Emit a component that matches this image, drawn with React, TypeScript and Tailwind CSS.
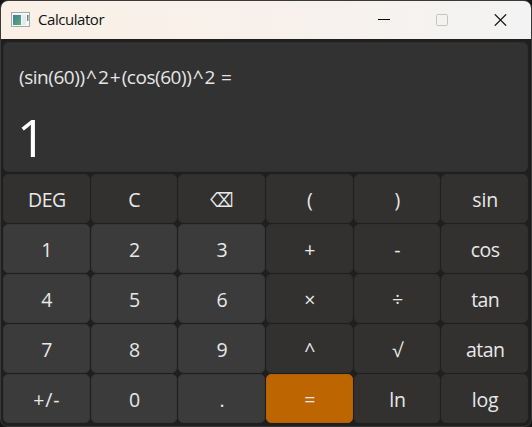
type Key = { label: string; kind: 'digit' | 'op' | 'equals'; style?: string };

const keys: Key[] = [
  { label: 'DEG', kind: 'op', style: 'tracking-[-0.5px]' },
  { label: 'C', kind: 'op' },
  { label: '⌫', kind: 'op', style: "inline-block font-['DejaVu_Sans'] origin-center translate-y-px scale-x-[0.84]" },
  { label: '(', kind: 'op' },
  { label: ')', kind: 'op' },
  { label: 'sin', kind: 'op', style: 'tracking-[-0.2px]' },
  { label: '1', kind: 'digit' },
  { label: '2', kind: 'digit' },
  { label: '3', kind: 'digit' },
  { label: '+', kind: 'op' },
  { label: '-', kind: 'op' },
  { label: 'cos', kind: 'op', style: 'tracking-[-0.5px]' },
  { label: '4', kind: 'digit' },
  { label: '5', kind: 'digit' },
  { label: '6', kind: 'digit' },
  { label: '×', kind: 'op' },
  { label: '÷', kind: 'op' },
  { label: 'tan', kind: 'op', style: 'tracking-[-0.6px]' },
  { label: '7', kind: 'digit' },
  { label: '8', kind: 'digit' },
  { label: '9', kind: 'digit' },
  { label: '^', kind: 'op' },
  { label: '√', kind: 'op' },
  { label: 'atan', kind: 'op', style: 'tracking-[-0.6px]' },
  { label: '+/-', kind: 'digit', style: 'tracking-[0.9px]' },
  { label: '0', kind: 'digit' },
  { label: '.', kind: 'digit' },
  { label: '=', kind: 'equals' },
  { label: 'ln', kind: 'op', style: 'tracking-[-0.2px]' },
  { label: 'log', kind: 'op', style: 'tracking-[-0.2px]' },
];

const fills = {
  digit: 'bg-[#3b3b3b] border-[#373737]',
  op: 'bg-[#33312f] border-[#302f2d]',
  equals: 'bg-[#bd6500] border-[#b66100]',
};

function AppIcon() {
  return (
    <svg width="19" height="16" viewBox="0 0 19 16">
      <defs>
        <linearGradient id="pane" x1="0" y1="0" x2="1" y2="1">
          <stop offset="0" stopColor="#4377ad" />
          <stop offset="1" stopColor="#58b267" />
        </linearGradient>
      </defs>
      <rect x="0.5" y="0.5" width="18" height="14" fill="#f5f7f8" stroke="#a4a9ac" />
      <rect x="2" y="3" width="8" height="10" fill="url(#pane)" />
      <rect x="11" y="3" width="4" height="10" fill="#e5eaed" />
      <rect x="16" y="3" width="1.5" height="6" fill="url(#pane)" />
    </svg>
  );
}

function TitleBar() {
  return (
    <header className="flex h-[38px] shrink-0 items-center bg-linear-to-r from-[#faf0e6] via-[#f8f1eb] to-[#f3f3f3] pl-[10px]">
      <AppIcon />
      <h1 className="-mt-[2px] ml-[8px] text-[15px] leading-5 tracking-[-0.45px] text-[#111]">Calculator</h1>
      <div className="ml-auto flex items-center gap-[46px] pr-[24px]">
        <svg width="12" height="12" viewBox="0 0 12 12"><path d="M0 5.5H12" stroke="#000" /></svg>
        <svg width="12" height="12" viewBox="0 0 12 12"><rect x="0.5" y="0.5" width="11" height="11" rx="1" fill="none" stroke="#c4c4c3" /></svg>
        <svg width="13" height="12" viewBox="0 0 13 12"><path d="M0.8 0.3L12.2 11.7M12.2 0.3L0.8 11.7" stroke="#111" strokeWidth="1.2" /></svg>
      </div>
    </header>
  );
}

/** Expression line; operators get a wider advance than the digits and letters. */
function Expression({ text }: { text: string }) {
  return (
    <div className="mt-[21px] h-[26px] text-[19px] leading-[26px] tracking-[-0.45px] whitespace-pre text-[#e6e6e6]">
      {text.split(/([\^+=])/).map((part, i) => (
        <span key={i} className={/^[\^+=]$/.test(part) ? 'inline-block w-[13.3px] text-center' : ''}>{part}</span>
      ))}
    </div>
  );
}

export default function App() {
  return (
    <div className="h-[427px] w-[532px] overflow-hidden bg-[#161616] font-['Open_Sans','Noto_Sans','DejaVu_Sans',sans-serif]">
      <main className="flex h-full flex-col overflow-hidden rounded-[8px] border border-[#393939] bg-[#1f1f1f]">
        <TitleBar />
        <section className="mr-[3px] ml-[2px] mt-[3px] h-[130px] shrink-0 rounded-[5px] border border-[#2e2e2e] bg-[#323232] pl-[15px]">
          <Expression text="(sin(60))^2+(cos(60))^2 =" />
          <div className="mt-[17px] -ml-[2px] h-[60px] text-[51px] leading-[60px] text-white">1</div>
        </section>
        <section className="mr-[3px] ml-[2px] mt-[2px] grid h-[249.5px] shrink-0 grid-cols-6 grid-rows-5 gap-px text-[19.5px] text-[#e8e8e8]">
          {keys.map((key) => (
            <button key={key.label} className={`flex min-w-0 items-center justify-center rounded-[5px] border pt-[2px] pl-px leading-none ${fills[key.kind]}`}>
              <span className={key.style}>{key.label}</span>
            </button>
          ))}
        </section>
      </main>
    </div>
  );
}
